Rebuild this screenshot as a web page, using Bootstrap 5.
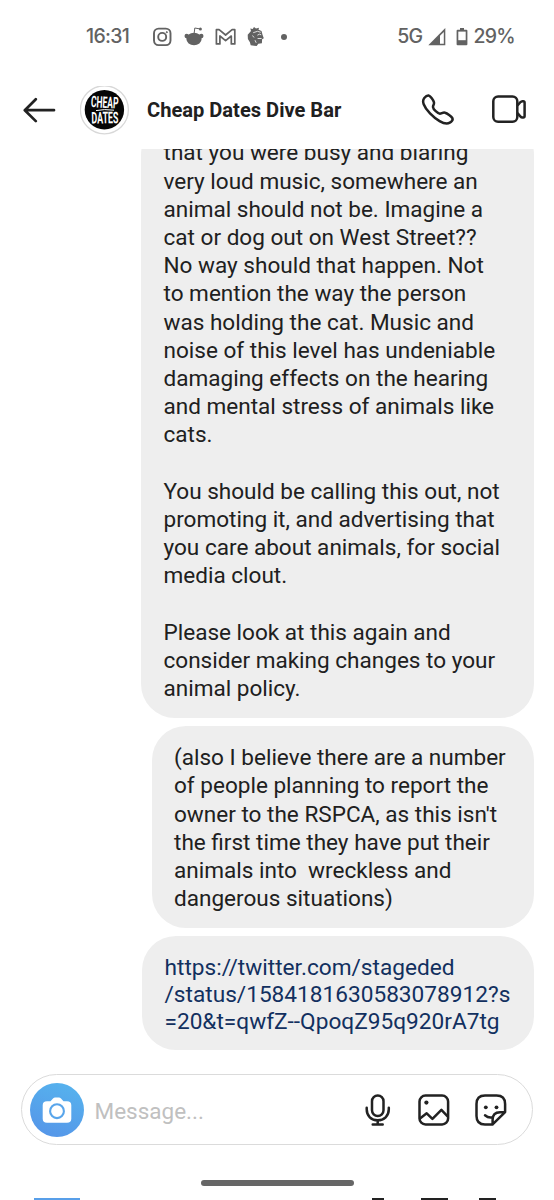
<!DOCTYPE html>
<html lang="en">
<head>
<meta charset="utf-8">
<meta name="viewport" content="width=device-width, initial-scale=1">
<title>Cheap Dates Dive Bar</title>
<link href="https://cdn.jsdelivr.net/npm/bootstrap@5.3.0/dist/css/bootstrap.min.css" rel="stylesheet">
<style>
body{font-family:Roboto,"Liberation Sans",sans-serif;color:#202020;background:#fff}
svg{display:block;flex:none}
.phone{width:554px;height:1200px}
.status{height:73px;padding:0 39px 0 86px;color:#626262;font:500 19.5px/1 Inter,Roboto,sans-serif;letter-spacing:-.7px}
.topbar{height:76px;padding:0 28px 0 23px}
.chat-title{font-size:20.1px;font-weight:700;line-height:24px;white-space:nowrap;margin:0 0 2px 17px}
.thread{height:901px;padding-right:20px;gap:8.5px}
.bubble{flex:none;background:#eee;border-radius:34px;padding:18px 0 14.5px 22.5px;font-size:22.55px;line-height:28.18px;white-space:pre}
.b1{width:393px}
.b2{width:382.5px}
.b3{width:392px;font-size:22.65px;line-height:26.9px;color:#12305f;padding:18.5px 0 14.5px 22.5px}
.composer{margin:24px 21px 0;height:71px;border:1.5px solid #dbdbdb;border-radius:36px;padding-left:7.5px;padding-right:25px}
.cam{width:54px;height:54px;background:linear-gradient(200deg,#56b5ee,#5593e8)}
.hint{font-size:22.5px;color:#c0c0c0;margin:4px 0 0 11px}
.homebar{width:153px;height:6px;border-radius:3px;background:#666;margin:35px auto 0}
.next-edge{height:2px;margin-top:12px;padding-left:34px}
.next-edge span{height:2px;background:#222}
</style>
</head>
<body>
<main class="phone d-flex flex-column overflow-hidden">
  <div class="status d-flex align-items-center">
    <span style="width:66px">16:31</span>
    <svg width="20" height="20" viewBox="0 0 20 20" fill="none" stroke="currentColor" stroke-width="1.9"><rect x="2" y="1.6" width="16.5" height="16.5" rx="4.6"/><circle cx="10.2" cy="9.9" r="4"/><circle cx="14.8" cy="5.2" r=".6" fill="currentColor" stroke-width="1"/></svg>
    <svg style="margin-left:12px" width="22" height="20" viewBox="0 0 22 20"><ellipse cx="10" cy="12" rx="7.6" ry="6.2" fill="currentColor"/><circle cx="2.7" cy="9" r="2.2" fill="currentColor"/><circle cx="17.3" cy="9" r="2.2" fill="currentColor"/><path d="M10.200 6 10.800 1l4.500.8" fill="none" stroke="currentColor" stroke-width="1"/><circle cx="16.400" cy="2.100" r="1.500" fill="currentColor"/></svg>
    <svg style="margin-left:9px" width="22" height="20" viewBox="0 0 22 20" fill="none" stroke="currentColor" stroke-width="1.700" stroke-linejoin="round"><path d="M1.400 16.900V2.700h2.700L10.600 8l6.500-5.300h2.700v14.200h-3.500V9l-5.700 4.600L4.900 9v7.900Z"/></svg>
    <svg style="margin-left:10px" width="18" height="20" viewBox="0 0 18 20"><path d="M4 4 3.300 1.500 5.700 2 7 0l2 1.500L12 .7l-.5 2 3 1.400 1 3.700 1.300 3.500-1.700 1-.2 4-3.600.5-1.600 2.200-6-.7-.8-3-2-3.200L.7 7.700Z" fill="currentColor"/><path d="M6.200 5.700l4.300-1.400 3.200 1M10.400 8.200l2-1 1.800.6M10.600 11.500h4M8 13.200l1.200 2.600M5.500 8.500l1.500 2" fill="none" stroke="#fff" stroke-width=".8"/></svg>
    <svg style="margin-left:16px" width="6" height="20" viewBox="0 0 6 20"><circle cx="3" cy="10" r="3" fill="currentColor"/></svg>
    <span class="ms-auto">5G</span>
    <svg style="margin-left:6px" width="18" height="20" viewBox="0 0 18 20"><path d="M.3 18.200 17.300 1v17.200Z" fill="currentColor"/><path d="M12 8.800 15.800 5v11.700H12Z" fill="#fff"/></svg>
    <svg style="margin-left:10px" width="12" height="20" viewBox="0 0 12 20"><path d="M4 .9h4v1.800h2.400q1 0 1 1v13.500q0 1-1 1H1.600q-1 0-1-1V3.700q0-1 1-1H4Z" fill="currentColor"/><path d="M2.300 4.600h7.400v8.600H2.300Z" fill="#fff"/></svg>
    <span style="margin-left:5px">29%</span>
  </div>

  <header class="topbar d-flex align-items-center">
    <svg width="34" height="28" viewBox="0 0 34 28" fill="none" stroke="#222" stroke-width="2.700" stroke-linecap="round" stroke-linejoin="round"><path d="M31 13.200H2.500M12.800 2.300 1.800 13.200l11 10.900"/></svg>
    <svg style="margin-left:23px" width="50" height="50" viewBox="0 0 50 50"><circle cx="24.400" cy="23.800" r="24" fill="#fff" stroke="#d8d8d8" stroke-width="1.300"/><circle cx="24.400" cy="23.800" r="19.700" fill="#060606"/>
      <g fill="#fff" font-family="Roboto,sans-serif" font-weight="700" font-size="16"><text x="10.800" y="21.800" textLength="27.500" lengthAdjust="spacingAndGlyphs" transform="rotate(3 24 20)">CHEAP</text><text x="11.500" y="37.300" textLength="27" lengthAdjust="spacingAndGlyphs" transform="rotate(-1 24 34)">DATES</text></g>
      <path d="M16 24.600q8-1.800 18-.4" fill="none" stroke="#fff" stroke-width="1"/></svg>
    <span class="chat-title">Cheap Dates Dive Bar</span>
    <svg class="ms-auto" width="34" height="34" viewBox="0 0 34 34" fill="none" stroke="#222" stroke-width="2.500" stroke-linejoin="round"><path d="M3.300 4C4.800 2.200 6.300 1.300 7.800 1.600 9.600 2.200 12.200 5.900 12.900 8.200c.6 1.900-1 3.200-.9 4.900.2 2.200 4.700 6.500 6.900 6.600 1.700 0 3-1.500 5.100-1 2.300.6 6.300 3.600 7.300 5.300.8 1.700-.7 3.700-2.500 4.700-2.300 1.300-6.600.5-10.200-1.600C11.900 23.200 5 16.200 2.700 10.200 1.800 7.800 1.900 5.700 3.300 4Z"/></svg>
    <svg style="margin-left:36px" width="35" height="32" viewBox="0 0 35 32" fill="none" stroke="#222" stroke-width="2.500" stroke-linejoin="round"><rect x="2.300" y="1.500" width="24" height="25.300" rx="4.800"/><path d="M26.500 10.500 29.300 7.300Q30.300 6.200 31.500 6.200h.7q1.400 0 1.400 1.500v13.200q0 1.500-1.400 1.500h-.7q-1.200 0-2.200-1.100l-2.800-3.200"/></svg>
  </header>

  <section class="thread d-flex flex-column justify-content-end align-items-end overflow-hidden">
    <div class="bubble b1"><span>that you were busy and blaring
very loud music, somewhere an
animal should not be. Imagine a
cat or dog out on West Street??
No way should that happen. Not
to mention the way the person
was holding the cat. Music and
noise of this level has undeniable
damaging effects on the hearing
and mental stress of animals like
cats.

You should be calling this out, not
promoting it, and advertising that
you care about animals, for social
media clout.

Please look at this again and
consider making changes to your
animal policy.</span></div>
    <div class="bubble b2"><span>(also I believe there are a number
of people planning to report the
owner to the RSPCA, as this isn't
the first time they have put their
animals into  wreckless and
dangerous situations)</span></div>
    <div class="bubble b3"><span>https://twitter.com/stageded
/status/1584181630583078912?s
=20&amp;t=qwfZ--QpoqZ95q920rA7tg</span></div>
  </section>

  <div class="composer d-flex align-items-center flex-shrink-0">
    <div class="cam rounded-circle d-flex align-items-center justify-content-center flex-shrink-0">
      <svg width="30" height="28" viewBox="0 0 30 28"><path d="M5 5.200h3.500L11 2.400q1-.9 2-.9h4q1 0 2 .9l2.500 2.800H25q4.300 0 4.300 4v13.500q0 4-4.300 4H5q-4.300 0-4.300-4V9.200q0-4 4.300-4Z" fill="#fff"/><circle cx="15" cy="15.200" r="6.900" fill="none" stroke="#58a5eb" stroke-width="2.100"/></svg>
    </div>
    <span class="hint">Message...</span>
    <svg class="ms-auto" width="26" height="34" viewBox="0 0 26 34" fill="none" stroke="#222" stroke-width="2.500" stroke-linecap="round"><rect x="7" y="2.500" width="11.500" height="20.500" rx="5.750"/><path d="M1.700 14.800v1.500C1.700 23 6.300 27.300 12.700 27.300S23.800 23 23.800 16.300v-1.500M12.700 27.500v3.800M7.700 31.500h10"/></svg>
    <svg style="margin-left:27px" width="32" height="34" viewBox="0 0 32 34" fill="none" stroke="#222" stroke-width="2.500" stroke-linejoin="round"><rect x="1.500" y="2.600" width="28.600" height="28.800" rx="6"/><circle cx="8.400" cy="9.600" r="2.100" fill="#222" stroke="none"/><path d="m2 25.500 6.700-5.200 5.700 5.600 9-9 6.200 6.400"/></svg>
    <svg style="margin-left:25px" width="32" height="34" viewBox="0 0 32 34" fill="none" stroke="#222" stroke-width="2.500" stroke-linejoin="round" stroke-linecap="round"><path d="M17.600 31.400H10q-8.500 0-8.500-8.500V11.100q0-8.500 8.500-8.500h11.600q8.500 0 8.500 8.500v8L17.600 31.400v-4.600q0-7.500 7.500-7.500h4.500M10 22.300q3.500 3 7.800 1.900"/><circle cx="10.800" cy="14.300" r="1.900" fill="#222" stroke="none"/><circle cx="21.500" cy="14.300" r="1.900" fill="#222" stroke="none"/></svg>
  </div>
  <div class="homebar flex-shrink-0"></div>
  <div class="next-edge d-flex flex-shrink-0">
    <span style="width:46px;background:#589fe9"></span><span style="width:12px;margin-left:292px"></span><span style="width:27px;margin-left:37px"></span><span style="width:17px;margin-left:31px"></span>
  </div>
</main>
<script src="https://cdn.jsdelivr.net/npm/bootstrap@5.3.0/dist/js/bootstrap.bundle.min.js"></script>
</body>
</html>
